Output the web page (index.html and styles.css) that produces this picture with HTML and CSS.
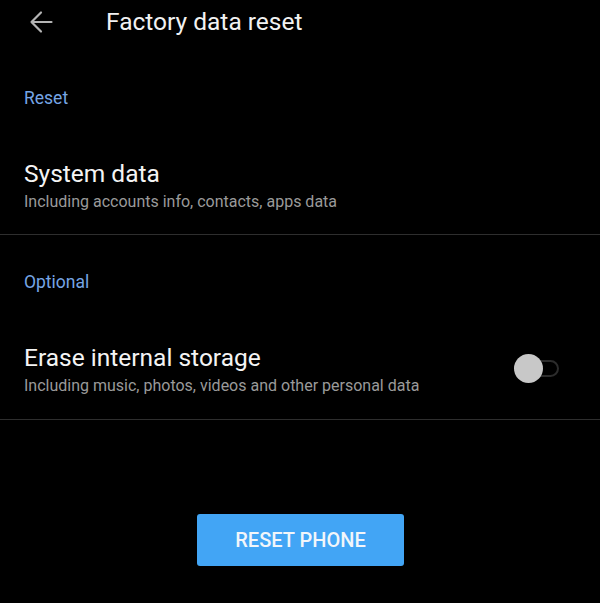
FILE: index.html
```html
<!DOCTYPE html>
<html>
<head>
<meta charset="utf-8">
<link rel="stylesheet" href="styles.css">
</head>
<body>
<div class="screen">
  <header class="appbar">
    <svg class="back" width="24" height="24" viewBox="0 0 24 24">
      <path d="M22.5 12H2.5M12 2.5L2.5 12L12 21.5" fill="none" stroke="#b4b4b4" stroke-width="2.2" stroke-linecap="round" stroke-linejoin="round"/>
    </svg>
    <h1 class="title">Factory data reset</h1>
  </header>

  <section class="group group-first">
    <div class="category">Reset</div>
    <div class="pref">
      <div class="pref-text">
        <div class="pref-title">System data</div>
        <div class="pref-summary">Including accounts info, contacts, apps data</div>
      </div>
    </div>
  </section>
  <div class="divider"></div>

  <section class="group group-second">
    <div class="category">Optional</div>
    <div class="pref pref-switch">
      <div class="pref-text">
        <div class="pref-title">Erase internal storage</div>
        <div class="pref-summary">Including music, photos, videos and other personal data</div>
      </div>
      <div class="switch">
        <span class="track"></span>
        <span class="knob"></span>
      </div>
    </div>
  </section>
  <div class="divider"></div>

  <div class="actions">
    <button class="reset-btn">RESET PHONE</button>
  </div>
</div>
</body>
</html>
```

FILE: styles.css
```css
html, body {
  margin: 0;
  padding: 0;
  background: #000;
}
body {
  font-family: Roboto, "Liberation Sans", sans-serif;
  color: #fff;
  width: 600px;
  height: 603px;
  overflow: hidden;
}
.screen {
  display: flex;
  flex-direction: column;
}
.appbar {
  height: 44px;
  display: flex;
  align-items: center;
}
.back {
  margin-left: 29px;
  display: block;
}
.title {
  margin: 0 0 0 53px;
  font-size: 24.5px;
  font-weight: 400;
  line-height: 44px;
  color: #f2f2f2;
}
.group {
  display: flex;
  flex-direction: column;
  padding-left: 24px;
}
.group-first {
  padding-top: 44px;
  padding-bottom: 22px;
}
.group-second {
  padding-top: 37px;
  padding-bottom: 23px;
}
.category {
  font-size: 17.5px;
  line-height: 20px;
  color: #76a6e6;
}
.pref {
  display: flex;
  align-items: flex-start;
  margin-top: 51px;
}
.pref-text {
  flex: 1;
}
.pref-title {
  font-size: 24.5px;
  line-height: 30px;
  color: #f4f4f4;
}
.pref-summary {
  margin-top: 3px;
  font-size: 16px;
  line-height: 20px;
  color: #9a9a9a;
}
.divider {
  height: 1px;
  background: #2e2e2e;
}
.switch {
  position: relative;
  width: 45px;
  height: 29px;
  margin-top: 11px;
  margin-right: 41px;
}
.track {
  position: absolute;
  left: 6px;
  right: 0;
  top: 6px;
  height: 17px;
  box-sizing: border-box;
  border: 2px solid #2c2c2c;
  border-radius: 9px;
}
.knob {
  position: absolute;
  left: 0;
  top: 0;
  width: 29px;
  height: 29px;
  border-radius: 50%;
  background: #c8c8c8;
}
.actions {
  display: flex;
  justify-content: center;
  padding-top: 94px;
}
.reset-btn {
  width: 207px;
  height: 52px;
  border: none;
  border-radius: 3px;
  background: #42a5f5;
  color: #f2f6fa;
  font-family: Roboto, "Liberation Sans", sans-serif;
  font-size: 20px;
  font-weight: 500;
  margin-left: 1px;
}
```
